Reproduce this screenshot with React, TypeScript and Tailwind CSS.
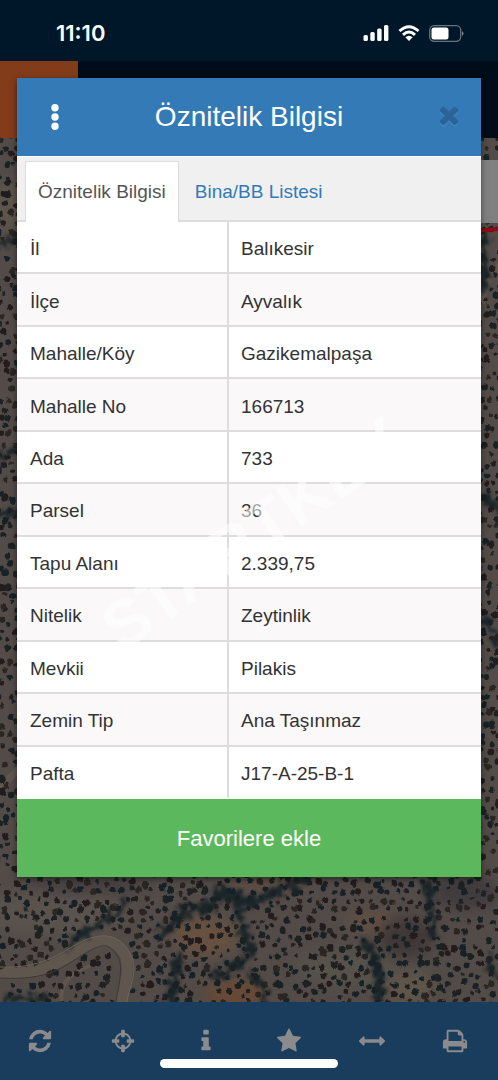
import React from 'react';

const ATTRIBUTES = [
  { label: 'İl', value: 'Balıkesir' },
  { label: 'İlçe', value: 'Ayvalık' },
  { label: 'Mahalle/Köy', value: 'Gazikemalpaşa' },
  { label: 'Mahalle No', value: '166713' },
  { label: 'Ada', value: '733' },
  { label: 'Parsel', value: '36' },
  { label: 'Tapu Alanı', value: '2.339,75' },
  { label: 'Nitelik', value: 'Zeytinlik' },
  { label: 'Mevkii', value: 'Pilakis' },
  { label: 'Zemin Tip', value: 'Ana Taşınmaz' },
  { label: 'Pafta', value: 'J17-A-25-B-1' },
];

const TOOLS = [
  {
    label: 'Yenile',
    path: 'M1639 1056q0 5-1 7-64 268-268 434.5t-478 166.5q-146 0-282.5-55t-243.5-157l-129 129q-19 19-45 19t-45-19-19-45v-448q0-26 19-45t45-19h448q26 0 45 19t19 45-19 45l-137 137q71 66 161 102t187 36q134 0 250-65t186-179q11-17 53-117 8-23 30-23h192q13 0 22.5 9.5t9.5 22.5zm25-800v448q0 26-19 45t-45 19h-448q-26 0-45-19t-19-45 19-45l138-138q-148-137-349-137-134 0-250 65t-186 179q-11 17-53 117-8 23-30 23h-199q-13 0-22.5-9.5t-9.5-22.5v-7q65-268 270-434.5t480-166.5q146 0 284 55.5t245 156.5l130-129q19-19 45-19t45 19 19 45z',
  },
  {
    label: 'Konum',
    path: 'M1325 1024h-109q-26 0-45-19t-19-45v-128q0-26 19-45t45-19h109q-32-108-112.5-188.5t-188.5-112.5v109q0 26-19 45t-45 19h-128q-26 0-45-19t-19-45v-109q-108 32-188.5 112.5t-112.5 188.5h109q26 0 45 19t19 45v128q0 26-19 45t-45 19h-109q32 108 112.5 188.5t188.5 112.5v-109q0-26 19-45t45-19h128q26 0 45 19t19 45v109q108-32 188.5-112.5t112.5-188.5zm339-192v128q0 26-19 45t-45 19h-143q-37 161-154.5 278.5t-278.5 154.5v143q0 26-19 45t-45 19h-128q-26 0-45-19t-19-45v-143q-161-37-278.5-154.5t-154.5-278.5h-143q-26 0-45-19t-19-45v-128q0-26 19-45t45-19h143q37-161 154.5-278.5t278.5-154.5v-143q0-26 19-45t45-19h128q26 0 45 19t19 45v143q161 37 278.5 154.5t154.5 278.5h143q26 0 45 19t19 45z',
  },
  {
    label: 'Bilgi',
    path: 'M1216 1344v128q0 26-19 45t-45 19h-512q-26 0-45-19t-19-45v-128q0-26 19-45t45-19h64v-384h-64q-26 0-45-19t-19-45v-128q0-26 19-45t45-19h384q26 0 45 19t19 45v576h64q26 0 45 19t19 45zm-128-1152v192q0 26-19 45t-45 19h-256q-26 0-45-19t-19-45v-192q0-26 19-45t45-19h256q26 0 45 19t19 45z',
  },
  {
    label: 'Favoriler',
    path: 'M1728 647q0 22-26 48l-363 354 86 500q1 7 1 20 0 21-10.5 35.5t-30.5 14.5q-19 0-40-12l-449-236-449 236q-22 12-40 12-21 0-31.5-14.5t-10.5-35.5q0-6 2-20l86-500-364-354q-25-27-25-48 0-37 56-46l502-73 225-455q19-41 49-41t49 41l225 455 502 73q56 9 56 46z',
  },
  {
    label: 'Ölçüm',
    path: 'M1792 896q0 26-19 45l-256 256q-19 19-45 19t-45-19-19-45v-128h-1024v128q0 26-19 45t-45 19-45-19l-256-256q-19-19-19-45t19-45l256-256q19-19 45-19t45 19 19 45v128h1024v-128q0-26 19-45t45-19 45 19l256 256q19 19 19 45z',
  },
  {
    label: 'Yazdır',
    path: 'M448 1536h896v-256h-896v256zm0-640h896v-384h-160q-40 0-68-28t-28-68v-160h-640v640zm1152 64q0-26-19-45t-45-19-45 19-19 45 19 45 45 19 45-19 19-45zm128 0v416q0 13-9.5 22.5t-22.5 9.5h-224v160q0 40-28 68t-68 28h-960q-40 0-68-28t-28-68v-160h-224q-13 0-22.5-9.5t-9.5-22.5v-416q0-79 56.5-135.5t135.5-56.5h64v-544q0-40 28-68t68-28h672q40 0 88 20t76 48l152 152q28 28 48 76t20 88v256h64q79 0 135.5 56.5t56.5 135.5z',
  },
];

const CLOSE_PATH =
  'M1490 1322q0 40-28 68l-136 136q-28 28-68 28t-68-28l-294-294-294 294q-28 28-68 28t-68-28l-136-136q-28-28-28-68t28-68l294-294-294-294q-28-28-28-68t28-68l136-136q28-28 68-28t68 28l294 294 294-294q28-28 68-28t68 28l136 136q28 28 28 68t-28 68l-294 294 294 294q28 28 28 68z';

// Small seeded generator so the trees always land in the same place
const createRandom = (seed: number) => () => {
  seed = (seed * 1664525 + 1013904223) % 4294967296;
  return seed / 4294967296;
};

const TREE_COLORS = ['#1d2023', '#241c1f', '#192428', '#2c2522'];

const isRoad = (x: number, y: number) => {
  if (y < 790) return false;
  const upper = x < 84 && Math.abs(y - (838 - Math.max(0, x - 30) * 0.5)) < 8;
  const bend = x >= 84 && x < 130 && y < 818 && y > 796;
  const lower = x > 113 && x < 132 && y >= 815;
  return upper || bend || lower;
};

const buildTrees = () => {
  const random = createRandom(733);
  const paths = TREE_COLORS.map(() => '');
  for (let row = 0; row < 94; row++) {
    for (let col = 0; col < 53; col++) {
      const x = col * 9.6 + (row % 2) * 5 + random() * 7 - 3.5;
      const y = row * 9.3 + random() * 7 - 3.5;
      const r = 1.9 + random() * 1.6;
      const color = Math.floor(random() * TREE_COLORS.length);
      if (random() < 0.06 || isRoad(x, y)) continue;
      paths[color] += `M${(x - r).toFixed(1)} ${y.toFixed(1)}a${r.toFixed(1)} ${r.toFixed(1)} 0 1 0 ${(2 * r).toFixed(1)} 0a${r.toFixed(1)} ${r.toFixed(1)} 0 1 0 ${(-2 * r).toFixed(1)} 0`;
    }
  }
  return paths;
};

const TREES = buildTrees();

const SatelliteMap = () => (
  <svg className="absolute inset-0 w-full h-full" viewBox="0 0 498 864" preserveAspectRatio="xMidYMid slice" aria-hidden="true">
    <defs>
      <filter id="soft" x="-20%" y="-20%" width="140%" height="140%">
        <feGaussianBlur stdDeviation="7" />
      </filter>
      <filter id="rough" x="-10%" y="-10%" width="120%" height="120%">
        <feTurbulence type="fractalNoise" baseFrequency="0.14" numOctaves="3" seed="4" />
        <feDisplacementMap in="SourceGraphic" scale="22" xChannelSelector="R" yChannelSelector="G" />
        <feGaussianBlur stdDeviation="1.4" />
      </filter>
      <filter id="tree">
        <feTurbulence type="fractalNoise" baseFrequency="0.18" numOctaves="2" seed="9" />
        <feDisplacementMap in="SourceGraphic" scale="4" xChannelSelector="R" yChannelSelector="G" />
        <feGaussianBlur stdDeviation="0.7" />
      </filter>
    </defs>
    <rect width="498" height="864" fill="#524b48" />
    <g filter="url(#soft)">
      <ellipse cx="8" cy="70" rx="20" ry="24" fill="#5d554b" />
      <ellipse cx="205" cy="798" rx="34" ry="20" fill="#675140" />
      <ellipse cx="235" cy="855" rx="30" ry="12" fill="#6a4832" />
      <ellipse cx="372" cy="785" rx="26" ry="12" fill="#625042" />
      <ellipse cx="270" cy="747" rx="46" ry="8" fill="#5d4e42" />
      <ellipse cx="410" cy="850" rx="22" ry="16" fill="#62564a" />
      <ellipse cx="345" cy="830" rx="50" ry="16" fill="#57524b" />
      <ellipse cx="55" cy="775" rx="70" ry="22" fill="#5a534d" />
      <ellipse cx="405" cy="800" rx="28" ry="20" fill="#3f3939" />
      <ellipse cx="465" cy="755" rx="34" ry="16" fill="#3f3a3d" />
      <ellipse cx="85" cy="748" rx="60" ry="8" fill="#443e40" />
    </g>
    {/* Roads */}
    <g fill="none" stroke="#5f564e">
      <path d="M0 835C45 838 62 822 82 811S112 800 122 812S126 840 121 868" strokeWidth="11" />
      <path d="M0 650L22 628" strokeWidth="7" />
      <path d="M482 166Q484 145 500 126" strokeWidth="6" />
      <path d="M62 866C58 842 74 834 92 827" strokeWidth="4" />
    </g>
    <g filter="url(#tree)">
      {TREES.map((d, i) => (
        <path key={TREE_COLORS[i]} d={d} fill={TREE_COLORS[i]} />
      ))}
    </g>
    {/* Hedges and gullies */}
    <g fill="none" stroke="#182027" strokeLinecap="round" opacity="0.9" filter="url(#rough)">
      <path d="M306 740Q280 750 258 763Q232 760 218 755Q212 775 185 772Q170 790 158 800" strokeWidth="10" />
      <path d="M125 766Q105 785 88 793L68 808" strokeWidth="7" />
      <path d="M240 765Q238 790 252 810Q245 828 214 838" strokeWidth="8" />
      <path d="M178 822Q176 845 169 862" strokeWidth="9" />
      <path d="M425 742Q432 760 433 800" strokeWidth="7" />
      <path d="M366 804Q383 830 378 864" strokeWidth="9" />
      <path d="M0 104L20 100M0 320L20 310M0 378L18 374" strokeWidth="7" />
      <path d="M484 100V150M484 360L498 370M484 480L498 505" strokeWidth="8" />
      <path d="M250 838Q268 848 266 866" strokeWidth="6" />
      <path d="M490 820L494 836M8 860H45" strokeWidth="7" />
    </g>
    <g fill="none" strokeWidth="1">
      <path d="M0 829C42 831 60 815 79 805S116 794 128 812S131 842 126 868" stroke="#6d635a" />
      <path d="M0 840C50 843 64 828 84 816S108 806 116 816S120 842 115 868" stroke="#3e3936" />
    </g>
    <path d="M476 93L498 91" stroke="#8f0b14" strokeWidth="4" />
  </svg>
);

const StatusBar = () => (
  <div className="h-[61px] bg-[#001729] flex items-center justify-between pl-14 pr-[34px] pt-[5px] text-white">
    <span className="font-['Inter',sans-serif] font-semibold text-[22px] leading-6">11:10</span>
    <div className="flex items-center gap-[9px]">
      <svg className="w-[26px] h-4" viewBox="0 0 26 16" fill="currentColor" aria-label="Sinyal" role="img">
        <rect x="0.500" y="10" width="4.400" height="6" rx="1.500" />
        <rect x="7.300" y="7" width="4.400" height="9" rx="1.500" />
        <rect x="14.200" y="3.500" width="4.400" height="12.500" rx="1.500" />
        <rect x="21" y="0" width="4.400" height="16" rx="1.500" />
      </svg>
      <svg className="w-[22px] h-4" viewBox="0 0 22 16" fill="none" stroke="currentColor" strokeWidth="3" aria-label="Wi-Fi" role="img">
        <path d="M1.500 6Q11-2.500 20.500 6" />
        <path d="M5 9.800Q11 4.300 17 9.800" />
        <path d="M11 16L7.300 12.300Q11 9.300 14.700 12.300Z" fill="currentColor" stroke="none" />
      </svg>
      <svg className="w-[35px] h-[17px]" viewBox="0 0 35 17" aria-label="Pil" role="img">
        <rect x="0.700" y="0.700" width="31" height="15.600" rx="4.500" fill="none" stroke="#67727d" strokeWidth="1.300" />
        <rect x="2.500" y="2.500" width="17" height="12" rx="2.500" fill="currentColor" />
        <path d="M33 6Q36 8.500 33 11Z" fill="#7d858d" />
      </svg>
    </div>
  </div>
);

const Toolbar = () => (
  <nav className="relative h-[78px] bg-[#1a3d5d] grid grid-cols-6 text-[#8b8b8d]">
    {TOOLS.map((tool) => (
      <button key={tool.label} type="button" aria-label={tool.label} className="pr-1 flex items-center justify-center">
        <svg className="w-[26px] h-[26px]" viewBox="0 0 1792 1792" fill="currentColor">
          <path d={tool.path} />
        </svg>
      </button>
    ))}
    {/* Home indicator */}
    <div className="absolute bottom-3 left-1/2 -translate-x-1/2 w-[178px] h-[9px] rounded-full bg-white" />
  </nav>
);

const AttributeDialog = () => (
  <section role="dialog" aria-labelledby="dialog-title" className="absolute top-[78px] inset-x-[17px] bg-white shadow-[0_2px_6px_rgba(0,0,0,0.5)]">
    <header className="h-[78px] bg-[#337ab7] flex items-center justify-between px-5 text-white">
      <button type="button" aria-label="Menü" className="w-9 h-10 flex items-center justify-center">
        <svg className="w-2 h-[26px]" viewBox="0 0 8 26" fill="currentColor">
          <circle cx="4" cy="3.700" r="3.700" />
          <circle cx="4" cy="13" r="3.700" />
          <circle cx="4" cy="22.300" r="3.700" />
        </svg>
      </button>
      <h1 id="dialog-title" className="text-[28px] leading-8">Öznitelik Bilgisi</h1>
      <button type="button" aria-label="Kapat" className="w-9 h-10 pb-1 flex items-center justify-end text-[#2a6496]">
        <svg className="w-7 h-7 -mr-0.5 shrink-0 drop-shadow-[0_1px_0_#4d8dc2]" viewBox="0 0 1792 1792" fill="currentColor">
          <path d={CLOSE_PATH} />
        </svg>
      </button>
    </header>

    <div role="tablist" className="mt-px h-[65px] px-2 pt-1 bg-[#f0f0f0] border-b-2 border-[#dddddd] flex text-[19px] leading-6">
      <button type="button" role="tab" aria-selected="true" className="-mb-0.5 px-3 bg-white border border-b-0 border-[#dddddd] text-[#555555]">
        Öznitelik Bilgisi
      </button>
      <button type="button" role="tab" aria-selected="false" className="px-4 pt-0.5 text-[#337ab7]">
        Bina/BB Listesi
      </button>
    </div>

    <div className="relative">
      <table className="w-full h-[577px] table-fixed border-separate border-spacing-0 text-[19px] leading-6 text-[#333333]">
        <tbody>
          {ATTRIBUTES.map((item) => (
            <tr key={item.label} className="group even:bg-[#faf8f9]">
              <th scope="row" className="w-[212px] pl-[13px] pt-1 text-left font-normal border-r-2 border-b-2 border-[#dddddd] group-last:border-b-white">
                {item.label}
              </th>
              <td className="pl-3 pt-1 border-b-2 border-[#dddddd] group-last:border-b-white">{item.value}</td>
            </tr>
          ))}
        </tbody>
      </table>
      {/* Watermark */}
      <svg className="absolute inset-0 w-full h-full pointer-events-none" aria-hidden="true">
        <text x="236" y="334" fontSize="66" fontWeight="700" textAnchor="middle" fill="#ffffff" fillOpacity="0.55" transform="rotate(-35 236 312)">
          STARTKEY
        </text>
      </svg>
    </div>

    <button type="button" className="w-full h-[78px] pt-0.5 bg-[#5cb85c] text-white text-[22px] leading-7">
      Favorilere ekle
    </button>
  </section>
);

const App = () => {
  return (
    <main className="relative min-h-screen flex flex-col overflow-hidden font-['Liberation_Sans',Arial,sans-serif]">
      <StatusBar />
      <div className="h-[77px] bg-[#000c19]">
        <div className="w-[78px] h-full bg-[#823c1a]" />
      </div>
      <div className="relative flex-1 overflow-hidden">
        <SatelliteMap />
        <div className="absolute top-[22px] right-0 w-12 h-[63px] bg-[#808080]" />
      </div>
      <Toolbar />
      <AttributeDialog />
    </main>
  );
};

export default App;
